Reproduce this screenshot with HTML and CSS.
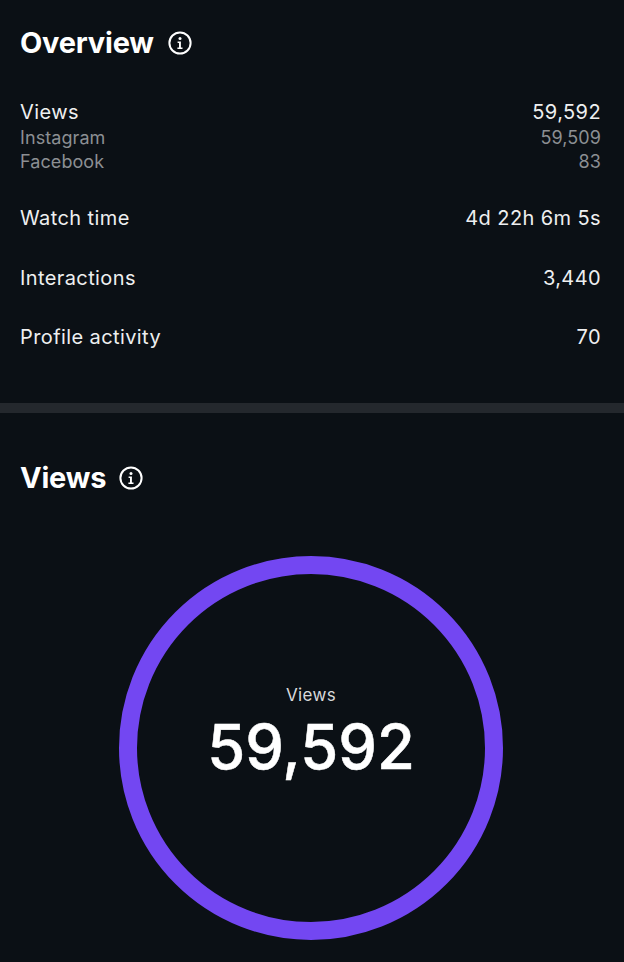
FILE: index.html
```html
<html>
  <head>
    <link rel="stylesheet" href="styles.css">
  </head>

  <body>
    <div class="section overview">
      <div class="section-header">
        <h2>Overview</h2>
        <svg class="info-icon" viewBox="0 0 24 24">
          <circle cx="12" cy="12" r="10.6" fill="none" stroke="#fff" stroke-width="2"/>
          <circle cx="12" cy="7.4" r="1.5" fill="#fff"/>
          <path d="M9.6 10.6h3.3v6h1.6v1.5H9.4v-1.5h1.6v-4.5H9.6z" fill="#fff"/>
        </svg>
      </div>

      <div class="stat-group">
        <div class="stat-row main"><span>Views</span><span>59,592</span></div>
        <div class="stat-row sub"><span>Instagram</span><span>59,509</span></div>
        <div class="stat-row sub"><span>Facebook</span><span>83</span></div>
      </div>
      <div class="stat-row spaced"><span>Watch time</span><span>4d 22h 6m 5s</span></div>
      <div class="stat-row spaced"><span>Interactions</span><span>3,440</span></div>
      <div class="stat-row spaced last"><span>Profile activity</span><span>70</span></div>
    </div>

    <div class="divider"></div>

    <div class="section views">
      <div class="section-header">
        <h2>Views</h2>
        <svg class="info-icon views-icon" viewBox="0 0 24 24">
          <circle cx="12" cy="12" r="10.6" fill="none" stroke="#fff" stroke-width="2"/>
          <circle cx="12" cy="7.4" r="1.5" fill="#fff"/>
          <path d="M9.6 10.6h3.3v6h1.6v1.5H9.4v-1.5h1.6v-4.5H9.6z" fill="#fff"/>
        </svg>
      </div>

      <div class="ring">
        <div class="ring-label">Views</div>
        <div class="ring-value">59,592</div>
      </div>
    </div>
  </body>
</html>
```

FILE: styles.css
```css
* {
  margin: 0px;
  padding: 0px;
  box-sizing: border-box;
  font-family: "Inter", "Liberation Sans", sans-serif;
}

body {
  overflow: hidden;
  width: 624px;
  height: 962px;
  background: #0b1015;
  color: #fff;
}

/* Section */
.section {
  padding: 0 23px 0 20px;
}
.overview {
  height: 403px;
  padding-top: 25px;
}
.views {
  padding-top: 47px;
}
.section-header {
  display: flex;
  align-items: center;
  height: 36px;
}
.section-header h2 {
  font-size: 29px;
  font-weight: 700;
  line-height: 36px;
  letter-spacing: -0.22px;
}
.info-icon {
  width: 24px;
  height: 24px;
  margin-left: 14px;
}
.views-icon {
  margin-left: 13px;
}
/* Section */

/* Stats */
.stat-group {
  margin-top: 38px;
}
.stat-row {
  display: flex;
  justify-content: space-between;
  align-items: center;
  height: 30px;
  font-size: 20px;
  letter-spacing: 0.4px;
  color: #eeeff0;
}
.stat-row.main {
  height: 26px;
}
.stat-row.sub {
  height: 24px;
  font-size: 18px;
  letter-spacing: 0.08px;
  color: #8c8f93;
}
.stat-row.spaced {
  margin-top: 30px;
}
.stat-row.last {
  margin-top: 29px;
}
/* Stats */

.divider {
  height: 10px;
  background: #24282d;
}

/* Ring */
.ring {
  width: 384px;
  height: 384px;
  margin: 60px 0 0 99px;
  padding-bottom: 30px;
  border: 18px solid #7347f2;
  border-radius: 50%;
  display: flex;
  flex-direction: column;
  align-items: center;
  justify-content: center;
}
.ring-label {
  font-size: 17px;
  line-height: 22px;
  letter-spacing: 0.3px;
  color: #d8d9db;
}
.ring-value {
  margin-top: 6px;
  font-size: 61.5px;
  line-height: 70px;
  font-weight: 500;
  -webkit-text-stroke: 0.5px #fff;
}
/* Ring */
```
